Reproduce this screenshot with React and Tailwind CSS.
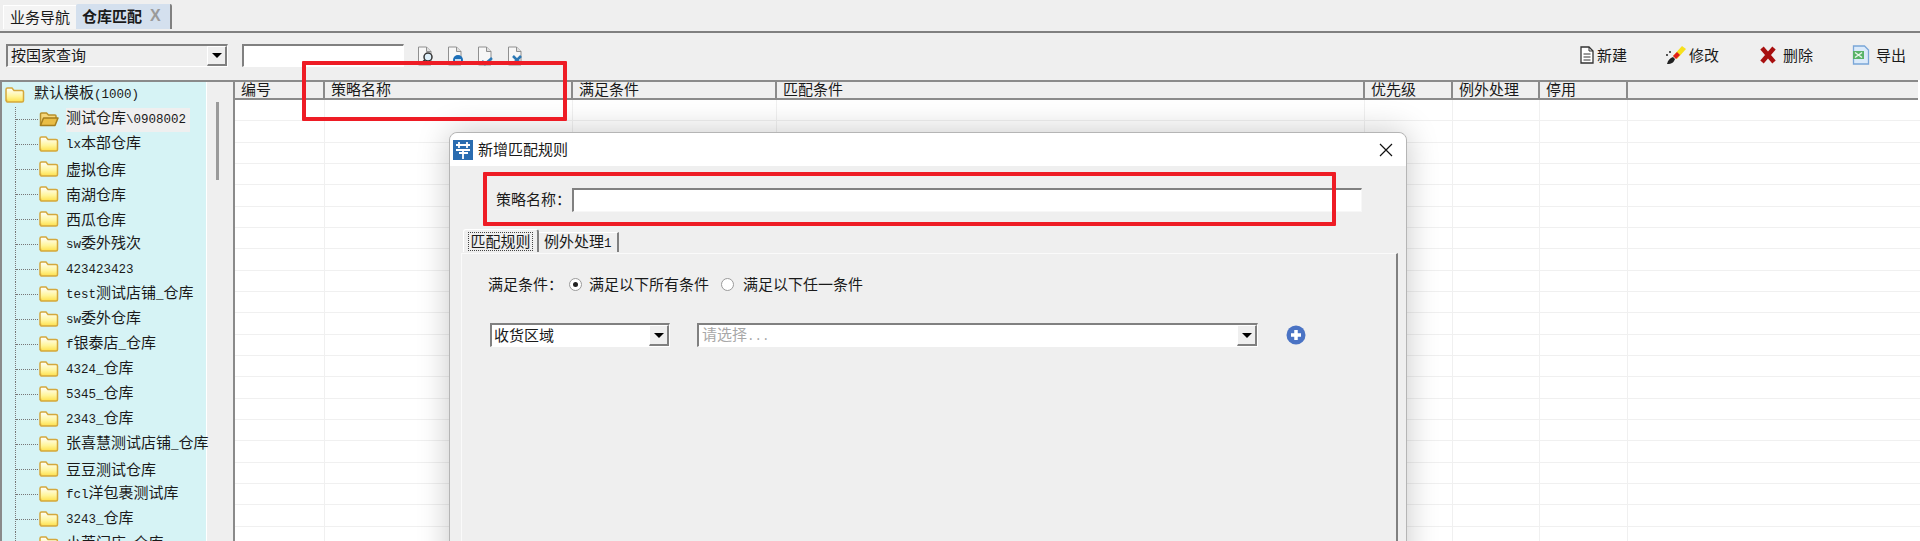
const treeItems = [
  '测试仓库\\0908002', 'lx本部仓库', '虚拟仓库', '南湖仓库', '西瓜仓库', 'sw委外残次', '423423423',
  'test测试店铺_仓库', 'sw委外仓库', 'f银泰店_仓库', '4324_仓库', '5345_仓库', '2343_仓库',
  '张喜慧测试店铺_仓库', '豆豆测试仓库', 'fcl洋包裹测试库', '3243_仓库', '小莱门店_仓库',
];

const columns = [
  { title: '编号', width: 'w-[90px]' },
  { title: '策略名称', width: 'w-[248px]' },
  { title: '满足条件', width: 'w-[204px]' },
  { title: '匹配条件', width: 'w-[588px]' },
  { title: '优先级', width: 'w-[88px]' },
  { title: '例外处理', width: 'w-[87px]' },
  { title: '停用', width: 'w-[88px]' },
];

// latin in this old app is half the width of a CJK glyph
function Txt({ children }) {
  return (
    <span className="whitespace-pre">
      {String(children).split(/([\x21-\x7e]+)/).map((part, i) =>
        /^[\x21-\x7e]+$/.test(part)
          ? <span key={i} className="font-['Liberation_Mono',monospace] text-[12.5px]">{part}</span>
          : <span key={i}>{part}</span>
      )}
    </span>
  );
}

function Folder({ open }) {
  return (
    <svg width="20" height="18" viewBox="0 0 20 18" className="shrink-0">
      <defs>
        <linearGradient id="fold" x1="0" y1="0" x2="0" y2="1">
          <stop offset="0" stopColor="#ffffff" />
          <stop offset="0.6" stopColor="#fff59a" />
          <stop offset="1" stopColor="#ffe04a" />
        </linearGradient>
      </defs>
      {open ? (
        <>
          <path d="M1.500 15.500V4a1 1 0 0 1 1-1h5l2 2h6.500a1 1 0 0 1 1 1v2" fill="#f6d77a" stroke="#b8912c" strokeWidth="1.500" />
          <path d="M1.500 15.500 4.500 8h14.500l-3 7.500z" fill="#e9bd45" stroke="#a67f1e" strokeWidth="1.500" strokeLinejoin="round" />
        </>
      ) : (
        <path d="M1 14.500V3.500a1.500 1.500 0 0 1 1.500-1.500h4.500l2 2.500h8a1.500 1.500 0 0 1 1.500 1.500v8.500a1.500 1.500 0 0 1-1.500 1.500h-15a1.500 1.500 0 0 1-.5-1.500z" fill="url(#fold)" stroke="#d4a83c" strokeWidth="1.500" />
      )}
    </svg>
  );
}

function DocIcon({ children }) {
  return (
    <svg width="18" height="20" viewBox="0 0 18 20" className="shrink-0">
      <path d="M1.500 1h8l4.500 4.500V19h-12.500z" fill="#f7f7f7" stroke="#8f8f8f" />
      <path d="M9.500 1v4.500H14" fill="#dedede" stroke="#8f8f8f" />
      {children}
    </svg>
  );
}

function DropArrow() {
  return (
    <div className="w-[20px] h-full shrink-0 flex items-center justify-center bg-[#efefef] border-r-2 border-b-2 border-[#808080] border-t border-l border-t-white border-l-white">
      <div className="w-0 h-0 border-x-[5px] border-x-transparent border-t-[5px] border-t-black" />
    </div>
  );
}

function Tool({ icon, label, className }) {
  return (
    <div className={`flex items-center ${className}`}>
      {icon}
      <span className="pb-[2px]">{label}</span>
    </div>
  );
}

function Radio({ checked }) {
  return (
    <div className="w-[13px] h-[13px] rounded-full border border-[#9a9a9a] bg-white flex items-center justify-center">
      {checked && <div className="w-[5px] h-[5px] rounded-full bg-[#222]" />}
    </div>
  );
}

export default function App() {
  return (
    <div className="relative w-[1920px] h-[541px] overflow-hidden bg-[#efefef] text-[15px] leading-none text-[#1a1a1a] font-['Noto_Sans_CJK_SC','Liberation_Sans',sans-serif]">
      {/* tabs */}
      <div className="h-[33px] flex items-end pl-[3px] pb-[2px] border-b-2 border-[#808080]">
        <div className="h-[24px] w-[73px] pb-[2px] flex items-center justify-center bg-[#f4f4f4] border-t border-l border-white">业务导航</div>
        <div className="h-[25px] w-[96px] pb-[2px] flex items-center pl-[6px] bg-[#d4e0ee] border-r-2 border-[#808080] rounded-t-[2px] font-bold">
          仓库匹配
          <span className="ml-[8px] text-[#9a9a9a] text-[16px] font-['Liberation_Sans',sans-serif]">X</span>
        </div>
      </div>

      {/* toolbar */}
      <div className="h-[47px] flex items-center pl-[6px] pb-[3px]">
        <div className="w-[222px] h-[23px] flex items-center justify-between pl-[3px] bg-[#efefef] border-t-2 border-l-2 border-[#808080] border-b border-r border-b-white border-r-white">
          <span className="pb-[2px]">按国家查询</span>
          <DropArrow />
        </div>
        <div className="w-[162px] h-[23px] ml-[14px] bg-white border-t-2 border-l-2 border-[#808080] border-b border-r border-b-white border-r-white" />
        <div className="flex items-center gap-[12px] ml-[13px] mt-[2px]">
          <DocIcon>
            <circle cx="11" cy="11" r="4" fill="#dff0fa" stroke="#333" strokeWidth="1.500" />
            <path d="M8 14l-4 4" stroke="#333" strokeWidth="2" />
          </DocIcon>
          <DocIcon>
            <circle cx="11" cy="14" r="5" fill="#1c6fb8" />
            <path d="M8 14h6" stroke="#fff" strokeWidth="1.500" />
          </DocIcon>
          <DocIcon>
            <path d="M5 15l3 3 7-6" fill="none" stroke="#2b78b5" strokeWidth="2.500" />
          </DocIcon>
          <DocIcon>
            <path d="M6 10l8 8M14 10l-8 8" stroke="#2b78b5" strokeWidth="2.500" />
          </DocIcon>
        </div>
        <div className="ml-auto flex items-center">
          <Tool
            className="gap-[3px] w-[85px]"
            label="新建"
            icon={
              <svg width="14" height="18" viewBox="0 0 14 18">
                <path d="M1 1h8l4 4v12H1z" fill="#fff" stroke="#333" strokeWidth="1.300" />
                <path d="M9 1v4h4M3.500 8h7M3.500 11h7M3.500 14h7" fill="none" stroke="#333" />
              </svg>
            }
          />
          <Tool
            className="gap-[2px] w-[95px]"
            label="修改"
            icon={
              <svg width="22" height="22" viewBox="0 0 22 22">
                <path d="M8 12l9-10 4 3-9 10z" fill="#f7e01c" />
                <path d="M8 12l4-4 3 3-4 4z" fill="#e01b1b" />
                <path d="M2 20c1-4 3-6 6-7l2 2c-1 3-3 5-8 5z" fill="#222" />
                <circle cx="2" cy="11" r="1" fill="#222" />
                <circle cx="5" cy="8" r="1" fill="#222" />
              </svg>
            }
          />
          <Tool
            className="gap-[7px] w-[92px]"
            label="删除"
            icon={
              <svg width="16" height="18" viewBox="0 0 16 18">
                <path d="M2 2l12 14M14 2L2 16" stroke="#a81010" strokeWidth="4.500" />
              </svg>
            }
          />
          <Tool
            className="gap-[6px] w-[68px]"
            label="导出"
            icon={
              <svg width="18" height="20" viewBox="0 0 18 20">
                <path d="M1.500 1h11l4 4v14h-15z" fill="#dbeafa" stroke="#7aa6d8" strokeWidth="1.300" />
                <path d="M1 6h11v8H1z" fill="#58b368" />
                <path d="M3 7.500l7 5M10 7.500l-7 5" stroke="#eaf6ec" strokeWidth="1.500" />
              </svg>
            }
          />
        </div>
      </div>

      <div className="flex h-[461px]">
        {/* tree */}
        <div className="w-[233px] shrink-0 flex border-t-2 border-l-2 border-[#8a8a8a] overflow-hidden">
          <div className="w-[205px] shrink-0 bg-[#d6f3f5] border-r border-white">
            <div className="h-[25px] flex items-center pl-[3px] gap-[9px]">
              <Folder />
              <div className="pb-[3px]"><Txt>默认模板(1000)</Txt></div>
            </div>
            {treeItems.map((name, i) => (
              <div key={name} className="h-[25px] flex items-center pl-[13px] whitespace-nowrap">
                <div className="w-[23px] h-full shrink-0 border-l border-dotted border-[#777]">
                  <div className="h-1/2 border-b border-dotted border-[#777]" />
                </div>
                <div className="ml-[1px] mr-[7px] mb-[2px]">
                  <Folder open={i === 0} />
                </div>
                <div className={`h-[24px] pb-[3px] flex items-center ${i === 0 ? 'bg-[#efefef] pr-[4px]' : ''}`}>
                  <Txt>{name}</Txt>
                </div>
              </div>
            ))}
          </div>
          <div className="flex-1 pt-[20px] pl-[9px]">
            <div className="w-[3px] h-[78px] bg-[#9a9a9a]" />
          </div>
        </div>

        {/* grid */}
        <div className="flex-1 flex flex-col border-l-2 border-[#8a8a8a] bg-white">
          <div className="h-[20px] shrink-0 flex bg-[#efefef] border-t-2 border-b-2 border-[#8a8a8a] mr-[2px]">
            {columns.map((col) => (
              <div key={col.title} className={`${col.width} shrink-0 pl-[6px] leading-[14px] border-r-2 border-[#8a8a8a]`}>
                {col.title}
              </div>
            ))}
            <div className="flex-1" />
          </div>
          {Array.from({ length: 21 }).map((_, i) => (
            <div key={i} className="h-[21.33px] shrink-0 flex border-b border-[#f0f0f0]">
              {columns.map((col) => (
                <div key={col.title} className={`${col.width} shrink-0 border-r border-[#f0f0f0]`} />
              ))}
            </div>
          ))}
        </div>
      </div>

      {/* dialog */}
      <div className="absolute left-[449px] top-[132px] w-[958px] h-[500px] flex flex-col bg-[#efefef] border border-[#b5b5b5] rounded-[8px] shadow-[0_0_32px_rgba(0,0,0,0.22)]">
        <div className="h-[33px] shrink-0 flex items-center pl-[3px] pr-[13px] bg-white rounded-t-[8px]">
          <svg width="20" height="20" viewBox="0 0 20 20" className="shrink-0">
            <rect x="0" y="0" width="20" height="20" fill="#2a6cb0" />
            <path d="M3 5h14M6 2v6M14 2v6M3 10h14M6 13h9M10 10v9" stroke="#fff" strokeWidth="1.800" />
          </svg>
          <span className="ml-[5px] pb-[3px]">新增匹配规则</span>
          <svg width="14" height="14" viewBox="0 0 14 14" className="ml-auto">
            <path d="M1 1l12 12M13 1L1 13" stroke="#111" strokeWidth="1.200" />
          </svg>
        </div>

        <div className="flex items-center h-[25px] mt-[21px] pl-[46px]">
          <span className="w-[75px] shrink-0 pb-[2px]">策略名称：</span>
          <div className="ml-[1px] w-[790px] h-[24px] bg-white border-t-2 border-l-2 border-[#808080] border-b border-r border-b-[#f7f7f7] border-r-[#f7f7f7]" />
        </div>

        <div className="flex items-end h-[22px] mt-[18px] ml-[13px]">
          <div className="h-[23px] w-[76px] flex items-center justify-center rounded-t-[3px] border-t border-l border-white border-r-2 border-r-[#808080]">
            <span className="border border-dotted border-[#444] px-[1px] h-[19px] leading-[15px]">匹配规则</span>
          </div>
          <div className="h-[20px] w-[80px] flex items-center pl-[5px] pb-[2px] border-r-2 border-[#808080] border-t border-t-white">
            <Txt>例外处理1</Txt>
          </div>
        </div>

        <div className="flex-1 mt-[1px] ml-[11px] mr-[8px] border-t border-l border-[#fafafa] border-r-2 border-r-[#808080] pl-[28px] pt-[22px]">
          <div className="flex items-center h-[16px] ml-[-2px]">
            <span className="pb-[2px]">满足条件：</span>
            <div className="ml-[6px]"><Radio checked /></div>
            <span className="ml-[7px] pb-[2px]">满足以下所有条件</span>
            <div className="ml-[12px]"><Radio /></div>
            <span className="ml-[9px] pb-[2px]">满足以下任一条件</span>
          </div>
          <div className="flex items-center mt-[31px] h-[24px]">
            <div className="w-[180px] h-[24px] flex items-center justify-between pl-[2px] bg-white border-t-2 border-l-2 border-[#808080] border-b border-r border-b-white border-r-white">
              <span className="pb-[2px]">收货区域</span>
              <DropArrow />
            </div>
            <div className="w-[561px] h-[24px] ml-[27px] flex items-center justify-between pl-[3px] bg-white text-[#a8a8a8] border-t-2 border-l-2 border-[#808080] border-b border-r border-b-white border-r-white">
              <div className="pb-[2px]"><Txt>请选择...</Txt></div>
              <DropArrow />
            </div>
            <svg width="20" height="20" viewBox="0 0 20 20" className="ml-[28px]">
              <circle cx="10" cy="10" r="9.500" fill="#4a73c4" />
              <path d="M10 5v10M5 10h10" stroke="#fff" strokeWidth="3.500" />
            </svg>
          </div>
        </div>
      </div>

      {/* annotation boxes */}
      <div className="absolute left-[302px] top-[61px] w-[265px] h-[60px] border-[4px] border-[#ee1c25] rounded-[1px]" />
      <div className="absolute left-[483px] top-[172px] w-[853px] h-[54px] border-[4px] border-[#ee1c25] rounded-[1px]" />
    </div>
  );
}
